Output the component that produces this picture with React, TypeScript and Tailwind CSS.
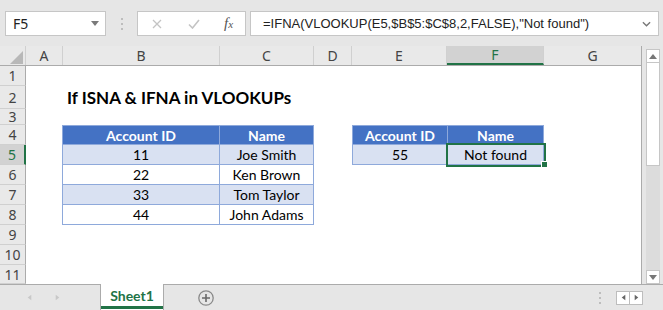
import React from 'react';

const COLS = [
  { label: 'A', w: 'w-[37px]' },
  { label: 'B', w: 'w-[157px]' },
  { label: 'C', w: 'w-[94px]' },
  { label: 'D', w: 'w-[38px]' },
  { label: 'E', w: 'w-[95px]' },
  { label: 'F', w: 'w-[97px]', sel: true },
  { label: 'G', w: 'w-[97px]', last: true },
];

const ROWS = ['h-[20px]', 'h-[23px]', 'h-[16px]', 'h-[20px]', 'h-[20px]', 'h-[20px]', 'h-[20px]', 'h-[20px]', 'h-[20px]', 'h-[20px]', 'h-[19px]'];

const ACCOUNTS = [
  { id: '11', name: 'Joe Smith' },
  { id: '22', name: 'Ken Brown' },
  { id: '33', name: 'Tom Taylor' },
  { id: '44', name: 'John Adams' },
];

function Triangle({ dir, className }: { dir: 'up' | 'down' | 'left' | 'right'; className?: string }) {
  const pts = {
    up: '0,6 8,6 4,1',
    down: '0,1 8,1 4,6',
    left: '6,0 6,8 1,4',
    right: '1,0 1,8 6,4',
  }[dir];
  const box = dir === 'up' || dir === 'down' ? '0 0 8 7' : '0 0 7 8';
  return (
    <svg viewBox={box} className={className}>
      <polygon points={pts} fill="currentColor" />
    </svg>
  );
}

function Dots() {
  return (
    <div className="flex flex-col gap-[3px]">
      <span className="w-[2px] h-[2px] bg-[#bdbdbd]" />
      <span className="w-[2px] h-[2px] bg-[#bdbdbd]" />
      <span className="w-[2px] h-[2px] bg-[#bdbdbd]" />
    </div>
  );
}

function TopBar() {
  return (
    <div className="h-[46px] flex items-start pt-[11px] pl-[5px] pr-[4px] text-[#222]">
      <div className="w-[101px] h-[25px] bg-white border border-[#c6c6c6] flex items-center justify-between pl-[7px] pr-[6px] text-[14px]">
        <span>F5</span>
        <Triangle dir="down" className="w-[8px] h-[7px] text-[#7a7a7a]" />
      </div>
      <div className="w-[31px] h-[25px] flex items-center justify-center">
        <Dots />
      </div>
      <div className="w-[109px] h-[25px] bg-white border border-[#c6c6c6] flex items-center pl-[14px]">
        <svg viewBox="0 0 10 10" className="w-[10px] h-[10px]">
          <path d="M1 1 L9 9 M9 1 L1 9" stroke="#c4c4c4" strokeWidth="1.3" fill="none" />
        </svg>
        <svg viewBox="0 0 12 10" className="w-[12px] h-[10px] ml-[26px]">
          <path d="M1 5.5 L4.5 9 L11 1" stroke="#c4c4c4" strokeWidth="1.6" fill="none" />
        </svg>
        <span className="ml-[24px] font-['Liberation_Serif',serif] italic text-[#555] text-[15px] leading-none">
          f<span className="text-[11px]">x</span>
        </span>
      </div>
      <div className="flex-1 ml-[4px] h-[25px] bg-white border border-[#c6c6c6] flex items-center justify-between pl-[12px] pr-[7px] text-[13px] font-['Liberation_Sans',sans-serif]">
        <span>=IFNA(VLOOKUP(E5,$B$5:$C$8,2,FALSE),"Not found")</span>
        <svg viewBox="0 0 10 6" className="w-[9px] h-[6px]">
          <path d="M1 1 L5 5 L9 1" stroke="#777" strokeWidth="1.5" fill="none" />
        </svg>
      </div>
    </div>
  );
}

function ColumnHeader() {
  return (
    <div className="h-[20px] flex border-b border-[#ababab] bg-[#e9e9e9] text-[14px] text-[#444]">
      <div className="w-[26px] h-full border-r border-[#d0d0d0] flex items-end justify-end pr-[2px] pb-[1px]">
        <svg viewBox="0 0 13 13" className="w-[13px] h-[13px]">
          <polygon points="0,13 13,13 13,0" fill="#b8b8b8" />
        </svg>
      </div>
      {COLS.map((c) => (
        <div
          key={c.label}
          className={`${c.w} h-full flex items-center justify-center ${c.last ? '' : 'border-r border-[#d0d0d0]'} ${
            c.sel ? 'bg-[#d2d2d2] text-[#217346] border-b-2 border-b-[#217346]' : ''
          }`}
        >
          {c.label}
        </div>
      ))}
    </div>
  );
}

function RowHeaders() {
  return (
    <div className="w-[26px] flex flex-col bg-[#e9e9e9] text-[14px] text-[#444]">
      {ROWS.map((h, i) => (
        <div
          key={i}
          className={`${h} flex items-center justify-center border-b border-[#d0d0d0] ${
            i === 4 ? 'bg-[#d2d2d2] text-[#217346] border-r-2 border-r-[#217346]' : 'border-r border-r-[#ababab]'
          }`}
        >
          {i + 1}
        </div>
      ))}
    </div>
  );
}

function Sheet() {
  const cell = 'h-full flex items-center justify-center border-r border-b border-[#8ea9db]';
  return (
    <div className="flex-1 bg-white flex flex-col text-black font-['Lato',sans-serif] text-[14px]">
      <div className="h-[20px]" />
      <div className="h-[23px] flex items-center pl-[41px] font-bold text-[17px]">If ISNA &amp; IFNA in VLOOKUPs</div>
      <div className="h-[16px]" />
      <div className="h-[100px] flex items-start pl-[36px]">
        <div className="w-[252px] flex flex-col border-l border-t border-[#8ea9db]">
          <div className="h-[19px] flex bg-[#4472c4] text-white font-bold">
            <div className={`w-[157px] ${cell}`}>Account ID</div>
            <div className={`w-[94px] ${cell}`}>Name</div>
          </div>
          {ACCOUNTS.map((a, i) => (
            <div key={a.id} className={`h-[20px] flex ${i % 2 === 0 ? 'bg-[#d9e1f2]' : 'bg-white'}`}>
              <div className={`w-[157px] ${cell}`}>{a.id}</div>
              <div className={`w-[94px] ${cell}`}>{a.name}</div>
            </div>
          ))}
        </div>
        <div className="relative ml-[38px] w-[192px] flex flex-col border-l border-t border-[#8ea9db]">
          <div className="h-[19px] flex bg-[#4472c4] text-white font-bold">
            <div className={`w-[95px] ${cell}`}>Account ID</div>
            <div className={`w-[96px] ${cell}`}>Name</div>
          </div>
          <div className="h-[20px] flex bg-[#d9e1f2]">
            <div className={`w-[95px] ${cell}`}>55</div>
            <div className={`w-[96px] ${cell}`}>Not found</div>
          </div>
          <div className="absolute left-[93px] top-[17px] w-[100px] h-[24px] border-2 border-[#217346]" />
          <div className="absolute left-[188px] top-[35px] w-[7px] h-[7px] bg-[#217346] border border-white" />
        </div>
      </div>
    </div>
  );
}

function Scrollbar() {
  return (
    <div className="w-[21px] flex flex-col pl-[4px] pr-[3px] pt-[3px]">
      <div className="h-[14px] bg-white border border-[#c6c6c6] flex items-center justify-center">
        <Triangle dir="up" className="w-[8px] h-[7px] text-[#777]" />
      </div>
      <div className="h-[103px] bg-white border border-t-0 border-[#c6c6c6]" />
      <div className="flex-1 bg-[#dcdcdc]" />
      <div className="h-[14px] bg-white border border-[#c6c6c6] flex items-center justify-center">
        <Triangle dir="down" className="w-[8px] h-[7px] text-[#777]" />
      </div>
    </div>
  );
}

function TabBar() {
  return (
    <div className="h-[26px] flex border-t border-[#ababab] text-[14px]">
      <div className="w-[100px] flex items-center pl-[27px] gap-[23px] text-[#c8c8c8]">
        <Triangle dir="left" className="w-[5px] h-[7px]" />
        <Triangle dir="right" className="w-[5px] h-[7px]" />
      </div>
      <div className="w-[64px] -mt-[1px] h-[26px] bg-white border-x border-[#ababab] flex flex-col">
        <div className="flex-1 flex items-center justify-center font-bold text-[#217346] font-['Lato',sans-serif]">Sheet1</div>
        <div className="h-[3px] bg-[#217346] mb-[1px]" />
      </div>
      <div className="ml-[34px] flex items-center">
        <svg viewBox="0 0 16 16" className="w-[16px] h-[16px]">
          <circle cx="8" cy="8" r="7.2" stroke="#8a8a8a" strokeWidth="1.3" fill="none" />
          <path d="M8 4 V12 M4 8 H12" stroke="#6a6a6a" strokeWidth="1.6" />
        </svg>
      </div>
      <div className="flex-1" />
      <div className="flex items-center mr-[15px]">
        <Dots />
      </div>
      <div className="flex items-center mr-[20px]">
        <div className="w-[14px] h-[14px] bg-white border border-[#bdbdbd] flex items-center justify-center">
          <Triangle dir="left" className="w-[5px] h-[7px] text-[#666]" />
        </div>
        <div className="w-[13px] h-[14px] bg-white border border-l-0 border-[#bdbdbd] flex items-center justify-center">
          <Triangle dir="right" className="w-[5px] h-[7px] text-[#666]" />
        </div>
      </div>
    </div>
  );
}

export default function App() {
  return (
    <div className="w-[663px] h-[310px] bg-[#e6e6e6] flex flex-col overflow-hidden font-['Noto_Sans',sans-serif]">
      <TopBar />
      <div className="h-[238px] flex">
        <div className="w-[642px] flex flex-col border-r border-[#ababab]">
          <ColumnHeader />
          <div className="flex-1 flex">
            <RowHeaders />
            <Sheet />
          </div>
        </div>
        <Scrollbar />
      </div>
      <TabBar />
    </div>
  );
}
